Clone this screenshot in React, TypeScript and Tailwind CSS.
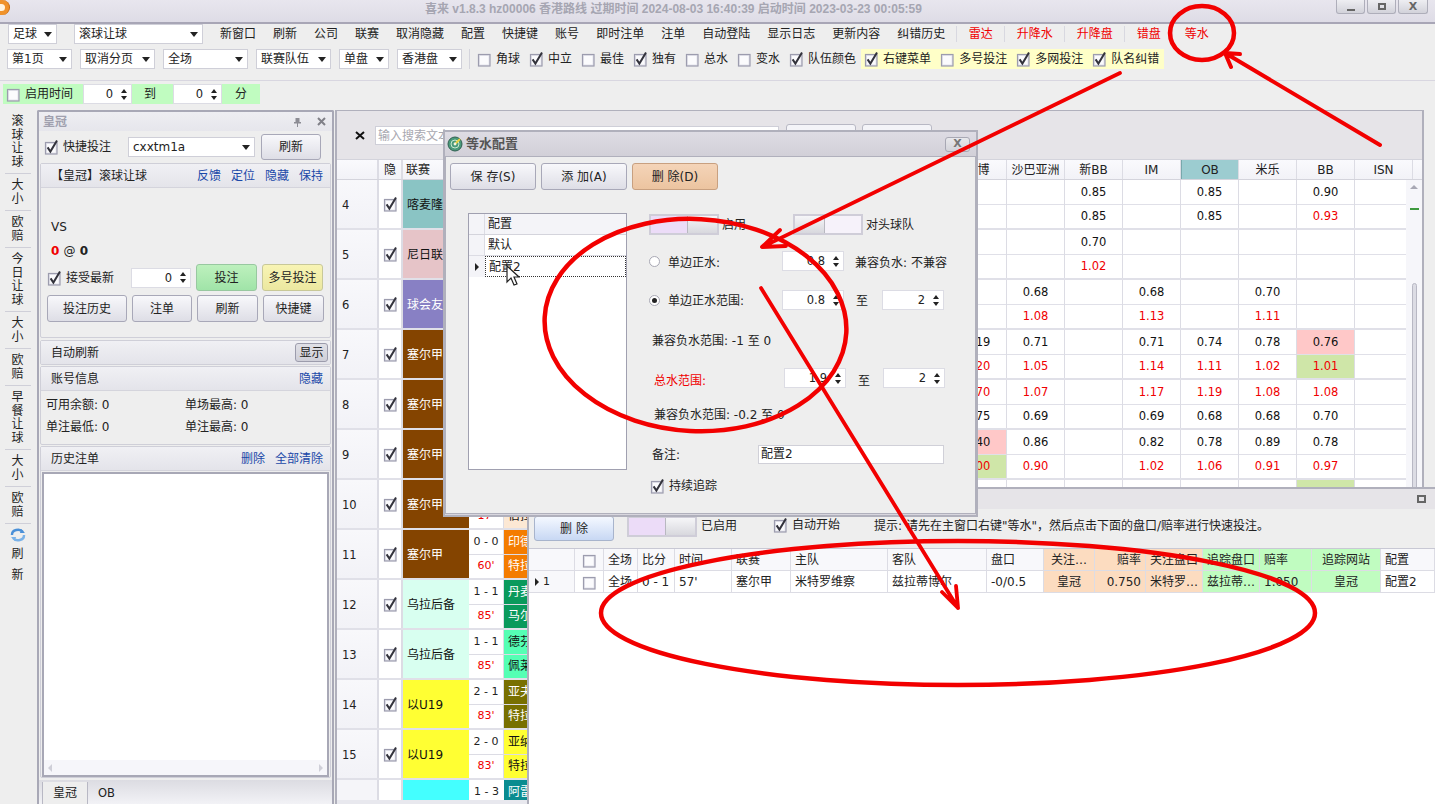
import React from 'react';

const Check = ({ on }: { on?: boolean }) => (
  <svg width="16" height="16" viewBox="0 0 16 16" className="shrink-0">
    <rect x="1.5" y="3.5" width="11.5" height="11.5" fill="#e4e4ec" stroke="#9c9cae" strokeWidth="1.2" />
    <rect x="3" y="5" width="8.5" height="8.5" fill="#fbfbfd" />
    {on && <path d="M3.6 8.4 L6.4 12.6 L13 1.4" fill="none" stroke="#33333c" strokeWidth="2" />}
  </svg>
);

const Cb = ({ on, label, cls }: { on?: boolean; label: string; cls?: string }) => (
  <div className={`flex items-center gap-[3px] whitespace-nowrap ${cls ?? ''}`}>
    <Check on={on} />
    <span>{label}</span>
  </div>
);

const Combo = ({ text, w, cls }: { text: string; w: string; cls?: string }) => (
  <div className={`${w} ${cls ?? ''} h-[20px] bg-white border border-[#cfcfd8] flex items-center justify-between pl-[4px] pr-[4px] shrink-0`}>
    <span className="whitespace-nowrap">{text}</span>
    <span className="w-0 h-0 border-x-[4px] border-x-transparent border-t-[5px] border-t-[#222]" />
  </div>
);

const Spin = ({ v, w, cls }: { v: string; w: string; cls?: string }) => (
  <div className={`${w} ${cls ?? ''} h-[20px] bg-white border border-[#dcdce4] flex items-center justify-end gap-[6px] pr-[3px] shrink-0`}>
    <span className="text-[11.5px]">{v}</span>
    <span className="flex flex-col gap-[3px] w-[9px] items-center">
      <span className="w-0 h-0 border-x-[3.5px] border-x-transparent border-b-[4px] border-b-[#222]" />
      <span className="w-0 h-0 border-x-[3.5px] border-x-transparent border-t-[4px] border-t-[#222]" />
    </span>
  </div>
);

const Btn = ({ text, cls, tone }: { text: string; cls: string; tone?: string }) => (
  <div
    className={`${cls} ${tone ?? 'bg-linear-to-b from-[#f8f8fb] to-[#dedee6] border-[#a8a8b8]'} border rounded-[3px] flex items-center justify-center shrink-0 whitespace-nowrap`}
  >
    {text}
  </div>
);

const Toggle = ({ left, cls }: { left?: boolean; cls: string }) => (
  <div className={`${cls} border-2 border-[#cfcdd8] flex shrink-0 ${left ? 'bg-[#f6f2fa]' : 'bg-[#ecdcf8]'}`}>
    {left ? (
      <div className="w-[30px] h-full bg-linear-to-b from-[#f6f6f8] to-[#d8d8de] border-r border-[#b8b8c0]" />
    ) : (
      <>
        <div className="flex-1" />
        <div className="w-[30px] h-full bg-linear-to-b from-[#f6f6f8] to-[#d8d8de] border-l border-[#b8b8c0]" />
      </>
    )}
  </div>
);

const TitleBar = () => (
  <div className="h-[22px] bg-linear-to-b from-[#e8e6ee] to-[#dedce6] flex items-start relative shrink-0">
    <div className="w-[10px] h-[15px] rounded-r-full bg-[#f0922a] border-r border-[#c86a10] shrink-0 flex items-center">
      <span className="w-[5px] h-[7px] bg-[#fff4e0] rounded-r-full" />
    </div>
    <div className="absolute left-[425px] top-[1px] font-bold text-[#a6a6b2] text-[12px] whitespace-nowrap [font-family:'Liberation_Sans','Noto_Sans_CJK_SC',sans-serif]">
      喜来 v1.8.3 hz00006 香港路线 过期时间 2024-08-03 16:40:39 启动时间 2023-03-23 00:05:59
    </div>
    <div className="ml-auto flex gap-[2px] pr-[7px]">
      <div className="w-[29px] h-[14px] rounded-b-[3px] border border-t-0 border-[#aeaeba] bg-linear-to-b from-[#eeeef2] to-[#d2d2da] flex items-end justify-center pb-[2px]">
        <span className="w-[8px] h-[2px] bg-[#666]" />
      </div>
      <div className="w-[29px] h-[14px] rounded-b-[3px] border border-t-0 border-[#aeaeba] bg-linear-to-b from-[#eeeef2] to-[#d2d2da] flex items-center justify-center">
        <span className="w-[8px] h-[7px] border-2 border-[#666]" />
      </div>
      <div className="w-[30px] h-[14px] rounded-b-[3px] border border-t-0 border-[#aeaeba] bg-linear-to-b from-[#eeeef2] to-[#d2d2da] flex items-center justify-center font-bold text-[#666] text-[11px] leading-none">
        X
      </div>
    </div>
  </div>
);

const menu = ['新窗口', '刷新', '公司', '联赛', '取消隐藏', '配置', '快捷键', '账号', '即时注单', '注单', '自动登陆', '显示日志', '更新内容', '纠错历史'];
const redMenu = ['雷达', '升降水', '升降盘', '错盘', '等水'];

const Toolbar = () => (
  <div className="h-[59px] border-t-2 border-[#a8a6b6] border-b border-b-[#d8d6e0] shrink-0 flex flex-col">
    <div className="flex items-center h-[20px] pl-[8px]">
      <Combo text="足球" w="w-[49px]" />
      <Combo text="滚球让球" w="w-[129px]" cls="ml-[17px]" />
      <div className="flex gap-[17px] ml-[17px] whitespace-nowrap text-[#222]">
        {menu.map((m) => (
          <span key={m}>{m}</span>
        ))}
      </div>
      <div className="flex ml-[11px] text-[#f00000] whitespace-nowrap">
        {redMenu.map((m) => (
          <span key={m} className="border-l border-[#d8d8e0] px-[11.5px]">
            {m}
          </span>
        ))}
      </div>
    </div>
    <div className="flex items-center h-[20px] pl-[7px] mt-[5px]">
      <div className="flex gap-[8px]">
        <Combo text="第1页" w="w-[65px]" />
        <Combo text="取消分页" w="w-[75px]" />
        <Combo text="全场" w="w-[85px]" />
        <Combo text="联赛队伍" w="w-[75px]" />
        <Combo text="单盘" w="w-[50px]" />
        <Combo text="香港盘" w="w-[65px]" />
      </div>
      <div className="w-px h-[20px] bg-[#d4d4dc] ml-[7px] mr-[7px]" />
      <div className="flex gap-[9px]">
        <Cb label="角球" />
        <Cb on label="中立" />
        <Cb label="最佳" />
        <Cb on label="独有" />
        <Cb label="总水" />
        <Cb label="变水" />
        <Cb on label="队伍颜色" />
      </div>
      <div className="flex gap-[9px] bg-[#ffffc8] h-[20px] items-center pl-[3px] pr-[5px] ml-[5px]">
        <Cb on label="右键菜单" />
        <Cb label="多号投注" />
        <Cb on label="多网投注" />
        <Cb on label="队名纠错" />
      </div>
    </div>
  </div>
);

const TimeRow = () => (
  <div className="flex items-center h-[20px] ml-[3px] mt-[3px] w-[257px] bg-[#c0fcc0] shrink-0">
    <Cb label="启用时间" cls="ml-[3px]" />
    <Spin v="0" w="w-[49px]" cls="ml-[10px]" />
    <span className="ml-[12px]">到</span>
    <Spin v="0" w="w-[49px]" cls="ml-[17px]" />
    <span className="ml-[13px]">分</span>
  </div>
);

const stripGroups = ['滚球让球', '大小', '欧赔', '今日让球', '大小', '欧赔', '早餐让球', '大小', '欧赔'];

const LeftStrip = () => (
  <div className="w-[37px] shrink-0 flex flex-col items-center pt-[5px] pr-[2px]">
    {stripGroups.map((g, i) => (
      <div key={i} className="w-[26px] flex flex-col items-center border-b border-[#cfcfd8] pb-[4px] mb-[5px] leading-[13.5px]">
        {g.split('').map((c, j) => (
          <span key={j}>{c}</span>
        ))}
      </div>
    ))}
    <svg width="16" height="14" viewBox="0 0 16 14" className="mt-[-1px]">
      <path d="M2 7 A6 5 0 0 1 13 4" fill="none" stroke="#4a90d8" strokeWidth="2.4" />
      <path d="M14 7 A6 5 0 0 1 3 10" fill="none" stroke="#7ab2e8" strokeWidth="2.4" />
      <path d="M11 1 L15 5 L10 5 Z" fill="#4a90d8" />
      <path d="M5 13 L1 9 L6 9 Z" fill="#7ab2e8" />
    </svg>
    <span className="mt-[5px] leading-[14px]">刷</span>
    <span className="mt-[7px] leading-[14px]">新</span>
  </div>
);

const SectionHead = ({ title, links, cls }: { title: string; links?: string[]; cls?: string }) => (
  <div className={`h-[24px] bg-linear-to-b from-[#f0f0f4] to-[#e4e4ea] border-b border-[#d4d4dc] flex items-center pl-[10px] pr-[7px] ${cls ?? ''}`}>
    <span>{title}</span>
    <div className="ml-auto flex gap-[10px] text-[#1a48a8]">
      {links?.map((l) => (
        <span key={l}>{l}</span>
      ))}
    </div>
  </div>
);

const LeftPanel = () => (
  <div className="w-[297px] shrink-0 border-2 border-[#a8a8b6] border-b-0 rounded-t-[2px] flex flex-col bg-[#eeeeee]">
    <div className="h-[19px] flex items-center pl-[4px] pr-[6px] bg-linear-to-b from-[#eeeef2] to-[#e6e6ec]">
      <span className="font-bold text-[#a0a0ae]">皇冠</span>
      <svg width="9" height="10" viewBox="0 0 9 10" className="ml-auto mr-[15px]">
        <path d="M2.5 1 H6.5 V5 H8 V6.5 H5 V10 H4 V6.5 H1 V5 H2.5 Z" fill="#8c8c94" />
      </svg>
      <svg width="9" height="9" viewBox="0 0 9 9">
        <path d="M1 1 L8 8 M8 1 L1 8" stroke="#808088" strokeWidth="2" />
      </svg>
    </div>
    <div className="h-[30px] flex items-center pl-[5px] mt-[1px]">
      <Cb on label="快捷投注" />
      <Combo text="cxxtm1a" w="w-[127px]" cls="ml-[17px]" />
      <Btn text="刷新" cls="w-[60px] h-[26px] ml-[6px]" />
    </div>
    <div className="mx-[1px] mt-[1px] border border-[#cfcfd8] rounded-[2px] h-[175px] flex flex-col">
      <SectionHead title="【皇冠】滚球让球" links={['反馈', '定位', '隐藏', '保持']} cls="pl-[8px]" />
      <div className="pl-[10px] mt-[31px]">VS</div>
      <div className="pl-[10px] mt-[8px] font-bold">
        <span className="text-[#f00000]">0</span> <span className="font-normal">@</span> 0
      </div>
      <div className="flex items-center mt-[5px] pl-[6px] h-[27px]">
        <Cb on label="接受最新" />
        <Spin v="0" w="w-[60px]" cls="ml-[17px]" />
        <Btn text="投注" cls="w-[61px] h-[27px] ml-[5px]" tone="bg-linear-to-b from-[#bdf0bd] to-[#a0e4a8] border-[#98c8a0]" />
        <Btn text="多号投注" cls="w-[61px] h-[27px] ml-[5px]" tone="bg-linear-to-b from-[#f8f4b4] to-[#ece8a0] border-[#c8c898]" />
      </div>
      <div className="flex items-center mt-[4px] pl-[6px] gap-[5px]">
        <Btn text="投注历史" cls="w-[80px] h-[27px]" />
        <Btn text="注单" cls="w-[60px] h-[27px]" />
        <Btn text="刷新" cls="w-[61px] h-[27px]" />
        <Btn text="快捷键" cls="w-[61px] h-[27px]" />
      </div>
    </div>
    <div className="mx-[1px] mt-[2px] border border-[#cfcfd8] rounded-[2px]">
      <div className="h-[23px] bg-linear-to-b from-[#f0f0f4] to-[#e4e4ea] flex items-center pl-[10px] pr-[2px]">
        <span>自动刷新</span>
        <Btn text="显示" cls="w-[33px] h-[19px] ml-auto" tone="bg-linear-to-b from-[#e0e0e6] to-[#cfcfd8] border-[#9c9cac]" />
      </div>
    </div>
    <div className="mx-[1px] mt-[1px] border border-[#cfcfd8] rounded-[2px] h-[79px]">
      <SectionHead title="账号信息" links={['隐藏']} />
      <div className="grid grid-cols-[139px_1fr] pl-[5px] pt-[7px] gap-y-[8px] leading-[14px]">
        <span>可用余额: 0</span>
        <span>单场最高: 0</span>
        <span>单注最低: 0</span>
        <span>单注最高: 0</span>
      </div>
    </div>
    <div className="mx-[1px] mt-[1px] border border-[#cfcfd8] rounded-[2px] flex-1 flex flex-col min-h-0">
      <SectionHead title="历史注单" links={['删除', '全部清除']} />
      <div className="flex-1 mx-[1px] mt-[1px] border-2 border-[#a8a8b6] bg-white flex flex-col justify-end">
        <div className="h-[15px] bg-[#f6f6fa] flex items-center justify-between px-[4px]">
          <span className="w-0 h-0 border-y-[4px] border-y-transparent border-r-[4px] border-r-[#cfcfd8]" />
          <span className="w-0 h-0 border-y-[4px] border-y-transparent border-l-[4px] border-l-[#cfcfd8]" />
        </div>
      </div>
    </div>
    <div className="h-[24px] mt-[2px] flex items-end pl-[3px] bg-linear-to-b from-[#dcdce2] to-[#f2f2f6] shrink-0">
      <div className="w-[46px] h-[22px] bg-[#eeeeee] border-x border-[#b8b8c4] flex items-center justify-center">皇冠</div>
      <div className="pl-[10px] h-[22px] flex items-center text-[11.5px]">OB</div>
    </div>
  </div>
);

type Row = {
  n: number;
  league: string;
  lg: string;
  score: string;
  time: string;
  team: [string, string];
  tm: string;
  vals: [string, string][];
};

const white = 'bg-white text-[#111]';
const leagues: Row[] = [
  { n: 4, league: '喀麦隆甲', lg: 'bg-[#8ac4c4] text-[#111]', score: '0 - 0', time: "30'", team: ['甲队', '乙队'], tm: white, vals: [['', ''], ['', ''], ['0.85', '0.85'], ['', ''], ['0.85', '0.85'], ['', ''], ['0.90', '0.93'], ['', '']] },
  { n: 5, league: '尼日联赛', lg: 'bg-[#e6c4c8] text-[#111]', score: '0 - 0', time: "30'", team: ['甲队', '乙队'], tm: white, vals: [['', ''], ['', ''], ['0.70', '1.02'], ['', ''], ['', ''], ['', ''], ['', ''], ['', '']] },
  { n: 6, league: '球会友谊', lg: 'bg-[#8880c4] text-white', score: '0 - 0', time: "30'", team: ['甲队', '乙队'], tm: white, vals: [['', ''], ['0.68', '1.08'], ['', ''], ['0.68', '1.13'], ['', ''], ['0.70', '1.11'], ['', ''], ['', '']] },
  { n: 7, league: '塞尔甲', lg: 'bg-[#844400] text-white', score: '0 - 0', time: "30'", team: ['甲队', '乙队'], tm: white, vals: [['0.19', '1.20'], ['0.71', '1.05'], ['', ''], ['0.71', '1.14'], ['0.74', '1.11'], ['0.78', '1.02'], ['0.76', '1.01'], ['', '']] },
  { n: 8, league: '塞尔甲', lg: 'bg-[#844400] text-white', score: '0 - 0', time: "30'", team: ['甲队', '乙队'], tm: white, vals: [['1.70', '0.75'], ['1.07', '0.69'], ['', ''], ['1.17', '0.69'], ['1.19', '0.68'], ['1.08', '0.68'], ['1.08', '0.70'], ['', '']] },
  { n: 9, league: '塞尔甲', lg: 'bg-[#844400] text-white', score: '0 - 0', time: "30'", team: ['甲队', '乙队'], tm: white, vals: [['0.40', '1.00'], ['0.86', '0.90'], ['', ''], ['0.82', '1.02'], ['0.78', '1.06'], ['0.89', '0.91'], ['0.78', '0.97'], ['', '']] },
  { n: 10, league: '塞尔甲', lg: 'bg-[#844400] text-white', score: '0 - 0', time: "17'", team: ['甲队', '伯拉'], tm: 'bg-[#fce8d4] text-[#111]', vals: [['', ''], ['', ''], ['', ''], ['', ''], ['', ''], ['', ''], ['', ''], ['', '']] },
  { n: 11, league: '塞尔甲', lg: 'bg-[#844400] text-white', score: '0 - 0', time: "60'", team: ['印德', '特拉'], tm: 'bg-[#f47c00] text-white', vals: [] },
  { n: 12, league: '乌拉后备', lg: 'bg-[#d8fff0] text-[#111]', score: '1 - 1', time: "85'", team: ['丹麦', '马尔'], tm: 'bg-[#0a9a5c] text-white', vals: [] },
  { n: 13, league: '乌拉后备', lg: 'bg-[#d8fff0] text-[#111]', score: '1 - 1', time: "85'", team: ['德芬', '佩莱'], tm: 'bg-[#55ffb4] text-[#111]', vals: [] },
  { n: 14, league: '以U19', lg: 'bg-[#ffff33] text-[#111]', score: '2 - 1', time: "83'", team: ['亚夫', '特拉'], tm: 'bg-[#787000] text-white', vals: [] },
  { n: 15, league: '以U19', lg: 'bg-[#ffff33] text-[#111]', score: '2 - 0', time: "83'", team: ['亚纳', '特拉'], tm: 'bg-[#ffff33] text-[#111]', vals: [] },
];

const heads = ['平博', '沙巴亚洲', '新BB', 'IM', 'OB', '米乐', 'BB', 'ISN'];

const isRed = (v: string) => !!v && parseFloat(v) >= 0.9;

const oddsBg = (n: number, col: number, sub: number) => {
  if ((n === 7 && col === 6) || (n === 9 && col === 0)) return sub === 0 ? 'bg-[#ffc8c8]' : 'bg-[#cfe6a8]';
  if (n === 10 && col === 6 && sub === 0) return 'bg-[#cfe6a8]';
  return '';
};

const valueClass = (r: Row, x: string) => {
  if (r.n === 4 && x === '0.90') return 'text-[#111]';
  return isRed(x) ? 'text-[#f00000]' : 'text-[#111]';
};

const GridRow = ({ r }: { r: Row }) => (
  <div className="flex h-[50px] border-b-2 border-[#e0e0e8] shrink-0 bg-white">
    <div className="w-[42px] shrink-0 bg-linear-to-b from-[#f8f8fb] to-[#f2f2f7] border-r-2 border-[#dcdce4] flex items-center pl-[5px] pt-[2px] text-[11.5px]">{r.n}</div>
    <div className="w-[24px] shrink-0 border-r-2 border-[#dcdce4] flex items-center justify-center pl-[2px]">
      <Check on />
    </div>
    <div className={`w-[66px] shrink-0 flex items-center pl-[4px] pt-[1px] whitespace-nowrap overflow-hidden ${r.lg}`}>{r.league}</div>
    <div className="w-[35px] shrink-0 flex flex-col border-r border-[#dcdce4]">
      <div className="flex-1 flex items-center justify-center text-[11px] border-b border-[#dcdce4]">{r.score}</div>
      <div className="flex-1 flex items-center justify-center text-[11px] text-[#f00000]">{r.time}</div>
    </div>
    <div className={`w-[117px] shrink-0 flex flex-col ${r.tm}`}>
      <div className="flex-1 flex items-center pl-[4px] border-b border-[#dcdce4]">{r.team[0]}</div>
      <div className="flex-1 flex items-center pl-[4px]">{r.team[1]}</div>
    </div>
    <div className="w-[328px] shrink-0" />
    {r.vals.map((v, i) => (
      <div key={i} className="w-[58px] shrink-0 flex flex-col border-r border-[#dcdce4]">
        {v.map((x, k) => (
          <div
            key={k}
            className={`flex-1 flex items-center justify-center text-[11.5px] ${k === 0 ? 'border-b border-[#e0e0e8]' : ''} ${oddsBg(r.n, i, k)} ${valueClass(r, x)}`}
          >
            {x}
          </div>
        ))}
      </div>
    ))}
  </div>
);

const GridPane = () => (
  <div className="w-[1089px] ml-[1px] shrink-0 border-l-2 border-t border-r-2 border-[#b0b0bc] flex flex-col relative bg-white overflow-hidden">
    <div className="h-[48px] bg-[#e6e4e8] flex items-center shrink-0">
      <svg width="10" height="9" viewBox="0 0 10 9" className="ml-[18px]">
        <path d="M1 1 L9 8 M9 1 L1 8" stroke="#111" strokeWidth="2" />
      </svg>
      <div className="ml-[10px] w-[404px] h-[19px] bg-white border border-[#cfcfd8] text-[#a8a8b0] pl-[2px] leading-[18px]">输入搜索文本</div>
      <div className="ml-[7px] w-[70px] h-[22px] bg-[#f4f4f8] border border-[#b8b8c4] rounded-[3px]" />
      <div className="ml-[6px] w-[70px] h-[22px] bg-[#f4f4f8] border border-[#b8b8c4] rounded-[3px]" />
    </div>
    <div className="flex h-[21px] shrink-0 bg-linear-to-b from-[#fafafd] to-[#f2f2f7] border-y border-[#d4d4dc]">
      <div className="w-[42px] border-r-2 border-[#dcdce4] shrink-0" />
      <div className="w-[24px] border-r-2 border-[#dcdce4] shrink-0 flex items-center justify-center">隐</div>
      <div className="w-[66px] shrink-0 flex items-center pl-[3px]">联赛</div>
      <div className="w-[480px] shrink-0" />
      {heads.map((h) => (
        <div
          key={h}
          className={`w-[58px] shrink-0 flex items-center justify-center border-r border-[#dcdce4] whitespace-nowrap ${h === 'OB' ? 'bg-[#9cccd0] border-l border-l-[#78a8ac]' : ''}`}
        >
          {h}
        </div>
      ))}
    </div>
    <div className="flex-1 min-h-0 flex flex-col overflow-hidden">
      {leagues.map((r) => (
        <GridRow key={r.n} r={r} />
      ))}
      <div className="flex h-[24px] shrink-0">
        <div className="w-[42px] bg-[#f5f5f9] border-r-2 border-[#dcdce4] shrink-0" />
        <div className="w-[24px] border-r-2 border-[#dcdce4] shrink-0" />
        <div className="w-[66px] bg-[#44ffff] shrink-0" />
        <div className="w-[35px] flex items-center justify-center text-[11px] shrink-0">1 - 3</div>
        <div className="w-[117px] bg-[#0a8c90] text-white flex items-center pl-[4px] shrink-0">阿雷</div>
      </div>
    </div>
    <div className="h-[4px] shrink-0 bg-[#e8e8ee]" />
    <div className="absolute right-0 top-[69px] bottom-0 w-[16px] bg-[#f6f6fa] flex flex-col items-center pt-[5px]">
      <span className="w-0 h-0 border-x-[4px] border-x-transparent border-b-[4px] border-b-[#a8a8b4]" />
      <span className="w-[9px] h-[2px] bg-[#3f9a3f] mt-[19px]" />
      <span className="w-[5px] flex-1 mt-[73px] rounded-t-[3px] bg-[#dcdce4] border border-[#b8b8c4]" />
    </div>
  </div>
);

const tableCols: { t: string; v: string; w: string; c: string; a?: string }[] = [
  { t: '全场', v: '全场', w: 'w-[34px]', c: '' },
  { t: '比分', v: '0 - 1', w: 'w-[37px]', c: '' },
  { t: '时间', v: "57'", w: 'w-[57px]', c: '' },
  { t: '联赛', v: '塞尔甲', w: 'w-[59px]', c: '' },
  { t: '主队', v: '米特罗维察', w: 'w-[97px]', c: '' },
  { t: '客队', v: '兹拉蒂博尔', w: 'w-[99px]', c: '' },
  { t: '盘口', v: '-0/0.5', w: 'w-[57px]', c: '' },
  { t: '关注…', v: '皇冠', w: 'w-[51px]', c: 'bg-[#fcdcc0]', a: 'justify-center' },
  { t: '赔率', v: '0.750', w: 'w-[51px]', c: 'bg-[#fcdcc0]', a: 'justify-end' },
  { t: '关注盘口', v: '米特罗…', w: 'w-[57px]', c: 'bg-[#fcdcc0]' },
  { t: '追踪盘口', v: '兹拉蒂…', w: 'w-[57px]', c: 'bg-[#c0fcc0]' },
  { t: '赔率', v: '1.050', w: 'w-[52px]', c: 'bg-[#c0fcc0]' },
  { t: '追踪网站', v: '皇冠', w: 'w-[69px]', c: 'bg-[#c0fcc0]', a: 'justify-center' },
  { t: '配置', v: '配置2', w: 'w-[54px]', c: '' },
];

const BottomPane = () => (
  <div className="absolute left-[527px] top-[487px] right-0 bottom-0 border-l-2 border-t-2 border-[#b0b0bc] flex flex-col bg-[#eeeeee]">
    <div className="h-[20px] bg-[#e6e4e8] flex items-center justify-end pr-[9px] shrink-0">
      <span className="w-[9px] h-[8px] border-2 border-[#666] bg-[#e6e4e8]" />
    </div>
    <div className="h-[39px] flex items-start shrink-0 pt-[7px]">
      <Btn text="删 除" cls="w-[80px] h-[25px] ml-[5px]" tone="bg-linear-to-b from-[#f4f8ff] to-[#c8d8f4] border-[#a8b4cc]" />
      <Toggle cls="w-[70px] h-[21px] ml-[13px]" />
      <span className="ml-[4px] mt-[2px]">已启用</span>
      <Cb on label="自动开始" cls="ml-[36px] mt-[1px]" />
      <span className="ml-[34px] mt-[2px] whitespace-nowrap">提示: 请先在主窗口右键"等水"，然后点击下面的盘口/赔率进行快速投注。</span>
    </div>
    <div className="flex-1 bg-white border-t border-[#c8c8d4] flex flex-col min-h-0">
      <div className="flex h-[22px] border-b border-[#dcdce4] bg-[#f8f8fb] shrink-0">
        <div className="w-[47px] border-r border-[#dcdce4]" />
        <div className="w-[29px] border-r border-[#dcdce4] flex items-center justify-center pl-[2px]">
          <Check />
        </div>
        {tableCols.map((c, i) => (
          <div key={i} className={`${c.w} ${c.c} shrink-0 border-r border-[#dcdce4] flex items-center px-[4px] whitespace-nowrap overflow-hidden ${c.a === 'justify-center' || i === 12 ? 'justify-center' : ''} ${c.a === 'justify-end' ? 'justify-end' : ''}`}>
            {c.t}
          </div>
        ))}
      </div>
      <div className="flex h-[22px] border-b border-[#dcdce4] shrink-0">
        <div className="w-[47px] border-r border-[#dcdce4] bg-[#f8f8fb] flex items-center pl-[6px] gap-[4px] text-[11px]">
          <span className="w-0 h-0 border-y-[4px] border-y-transparent border-l-[4px] border-l-[#222]" />1
        </div>
        <div className="w-[29px] border-r border-[#dcdce4] flex items-center justify-center pl-[2px]">
          <Check />
        </div>
        {tableCols.map((c, i) => (
          <div key={i} className={`${c.w} ${c.c} shrink-0 border-r border-[#dcdce4] flex items-center px-[4px] whitespace-nowrap overflow-hidden ${c.a ?? ''}`}>
            {c.v}
          </div>
        ))}
      </div>
    </div>
  </div>
);

const Radio = ({ on }: { on?: boolean }) => (
  <span className="w-[11px] h-[11px] rounded-full bg-white border border-[#a8a8b4] flex items-center justify-center shrink-0">
    {on && <span className="w-[5px] h-[5px] rounded-full bg-[#222]" />}
  </span>
);

const Dialog = () => (
  <div className="absolute left-[443px] top-[130px] w-[535px] h-[387px] border-2 border-[#b0b0bc] bg-[#d8d6de] flex flex-col">
    <div className="h-[24px] flex items-center pl-[2px] bg-linear-to-b from-[#dedce4] to-[#d2d0d8] shrink-0">
      <svg width="16" height="16" viewBox="0 0 16 16" className="shrink-0">
        <circle cx="8" cy="8" r="7" fill="#4a9a7a" stroke="#2f5f50" />
        <circle cx="8" cy="8" r="4" fill="none" stroke="#c8e8d0" />
        <path d="M8 8 L13 3" stroke="#e8d040" strokeWidth="2" />
        <circle cx="8" cy="8" r="1.4" fill="#f4f4e0" />
      </svg>
      <span className="ml-[3px] font-bold text-[#555] text-[13px]">等水配置</span>
      <div className="ml-auto mr-[6px] w-[25px] h-[15px] rounded-[3px] border border-[#a8a8b4] bg-linear-to-b from-[#e8e8ec] to-[#d4d4da] flex items-center justify-center font-bold text-[#777] text-[11px]">X</div>
    </div>
    <div className="flex-1 mb-[1px] border border-[#b0b0bc] bg-[#eeeeee] flex flex-col min-h-0">
      <div className="flex gap-[5px] pl-[4px] pt-[6px]">
        <Btn text="保 存(S)" cls="w-[86px] h-[27px]" />
        <Btn text="添 加(A)" cls="w-[86px] h-[27px]" />
        <Btn text="删 除(D)" cls="w-[86px] h-[27px]" tone="bg-linear-to-b from-[#f4d4b8] to-[#ecc4a0] border-[#c8a080]" />
      </div>
      <div className="flex pl-[22px] pt-[23px]">
        <div className="w-[159px] h-[257px] border border-[#a0a0b0] bg-white flex flex-col shrink-0">
          <div className="h-[21px] flex bg-[#f4f4f8] border-b border-[#d4d4dc] items-center">
            <span className="w-[16px] h-full border-r border-[#dcdce4]" />
            <span className="pl-[3px]">配置</span>
          </div>
          <div className="h-[21px] flex border-b border-[#dcdce4] items-center">
            <span className="w-[16px] h-full bg-[#f4f4f8] border-r border-[#dcdce4]" />
            <span className="pl-[3px]">默认</span>
          </div>
          <div className="h-[21px] flex items-center">
            <span className="w-[16px] h-full bg-[#f4f4f8] flex items-center justify-center">
              <span className="w-0 h-0 border-y-[4px] border-y-transparent border-l-[4px] border-l-[#222]" />
            </span>
            <span className="flex-1 h-full border border-dotted border-[#333] pl-[3px] flex items-center">配置2</span>
          </div>
        </div>
        <div className="ml-[22px] pt-[1px] flex flex-col flex-1">
          <div className="flex items-center h-[21px]">
            <Toggle cls="w-[70px] h-[21px]" />
            <span className="ml-[3px]">启用</span>
            <Toggle left cls="w-[70px] h-[21px] ml-[47px]" />
            <span className="ml-[3px]">对头球队</span>
          </div>
          <div className="flex items-center h-[20px] mt-[16px]">
            <Radio />
            <span className="ml-[8px] pt-[4px]">单边正水:</span>
            <Spin v="0.8" w="w-[62px]" cls="ml-[62px]" />
            <span className="ml-[11px] whitespace-nowrap pt-[4px]">兼容负水: 不兼容</span>
          </div>
          <div className="flex items-center h-[20px] mt-[19px]">
            <Radio on />
            <span className="ml-[8px] whitespace-nowrap pt-[2px]">单边正水范围:</span>
            <Spin v="0.8" w="w-[62px]" cls="ml-[38px]" />
            <span className="ml-[12px] pt-[2px]">至</span>
            <Spin v="2" w="w-[62px]" cls="ml-[14px]" />
          </div>
          <div className="mt-[24px] pl-[3px] leading-[14px]">兼容负水范围: -1 至 0</div>
          <div className="flex items-center h-[20px] mt-[20px] pl-[5px]">
            <span className="text-[#f00000] w-[130px] pt-[5px]">总水范围:</span>
            <Spin v="1.9" w="w-[62px]" />
            <span className="ml-[12px] pt-[5px]">至</span>
            <Spin v="2" w="w-[62px]" cls="ml-[13px]" />
          </div>
          <div className="mt-[20px] pl-[5px] leading-[14px]">兼容负水范围: -0.2 至 0</div>
          <div className="flex items-center h-[20px] mt-[22px] pl-[3px]">
            <span className="w-[106px] pt-[1px]">备注:</span>
            <div className="w-[186px] h-[19px] bg-white border border-[#d0d0d8] pl-[2px] leading-[17px]">配置2</div>
          </div>
          <Cb on label="持续追踪" cls="mt-[14px] ml-[1px]" />
        </div>
      </div>
    </div>
  </div>
);

const Annotations = () => (
  <svg className="absolute inset-0 pointer-events-none" width="1435" height="804" viewBox="0 0 1435 804" fill="none" stroke="#f20000" strokeWidth="4.5" strokeLinecap="round" strokeLinejoin="round">
    <ellipse cx="1202" cy="33" rx="32" ry="27" />
    <ellipse cx="695.5" cy="325" rx="151" ry="106" transform="rotate(3 695 325)" />
    <ellipse cx="958" cy="613" rx="357" ry="72" />
    <path d="M1380 145 L1225 53 M1225 53 L1240 54 M1225 53 L1231 67" strokeWidth="4" />
    <path d="M1120 73 L762 247 M762 247 L780 230 M762 247 L786 246" strokeWidth="3.8" />
    <path d="M761 288 L958 608 M958 608 L942 592 M958 608 L956 586" strokeWidth="3.8" />
  </svg>
);

const Cursor = () => (
  <svg className="absolute left-[506px] top-[265px]" width="14" height="22" viewBox="0 0 14 22">
    <path d="M1 1 L1 17 L5 13 L8 20 L11 19 L8 12 L13 12 Z" fill="#fff" stroke="#222" strokeWidth="1.2" />
  </svg>
);

export default function App() {
  return (
    <div className="relative w-[1435px] h-[804px] overflow-hidden bg-[#eeeeee] text-[12px] text-[#222] leading-[16px] flex flex-col [font-family:'DejaVu_Sans','Noto_Sans_CJK_SC',sans-serif]">
      <TitleBar />
      <Toolbar />
      <TimeRow />
      <div className="flex flex-1 min-h-0 mt-[6px]">
        <LeftStrip />
        <LeftPanel />
        <GridPane />
      </div>
      <BottomPane />
      <Dialog />
      <Cursor />
      <Annotations />
    </div>
  );
}
